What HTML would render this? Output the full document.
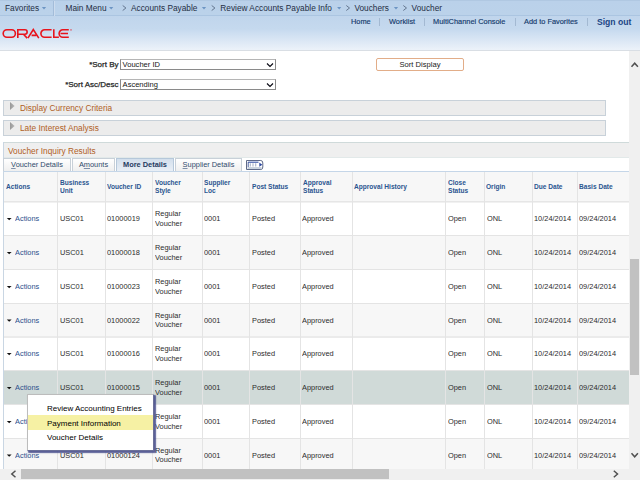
<!DOCTYPE html>
<html><head><meta charset="utf-8"><style>
*{margin:0;padding:0;box-sizing:border-box}
html,body{width:640px;height:480px;overflow:hidden;background:#fff;font-family:"Liberation Sans",sans-serif}
div{position:absolute;white-space:nowrap}
svg{position:absolute}
#nav{left:0;top:0;width:640px;height:16px;background:linear-gradient(#b0c8e2 0,#b0c8e2 1px,#bad1ea 1px,#bbd2ea 15px,#abc5e1 15px,#abc5e1 16px)}
.nt{top:2px;font-size:8.3px;color:#1f2e44;line-height:12px}
.dd{top:7.5px;width:0;height:0;border-left:2px solid transparent;border-right:2px solid transparent;border-top:2.5px solid #6f93bd}
#hdr{left:0;top:16px;width:640px;height:34px;background:linear-gradient(#c0d5ec 0,#c5d9ee 13px,#cddef1 17px,#d8e5f4 23px,#e3ecf7 29px,#ecf2f9 34px)}
#hline{left:0;top:50px;width:640px;height:1px;background:#d9dee4}
.hl{top:17px;font-size:7.4px;color:#143a6c;line-height:10px;-webkit-text-stroke:0.15px #143a6c}
.hs{top:18px;width:1px;height:8px;background:#a3b9d2}
.lbl{font-size:8px;color:#262626;line-height:10px;text-align:right;-webkit-text-stroke:0.25px #262626}
.sel{left:120px;width:156px;height:11px;border:1px solid #8a8a8a;border-top-color:#b5b5b5;background:#fff;font-size:7.55px;color:#151515;line-height:9px;padding-left:1.6px}
.bar{left:3px;width:603px;height:16px;background:#ececec;border:1px solid #c8d1d9}
.tri{left:6px;top:2px;width:0;height:0;border-top:3.75px solid transparent;border-bottom:3.75px solid transparent;border-left:5px solid #999}
.bt{left:16px;top:2px;font-size:8.3px;color:#b0601f;line-height:10px}
.tab{top:158px;height:13px;border:1px solid #c8d0d8;border-bottom:none;background:linear-gradient(#fff,#efefef);font-size:7.4px;color:#2f4b6b;line-height:11px;text-align:center}
.tab.s{background:linear-gradient(#d3dfec,#e9eff6);border-color:#b6c8da;color:#1f3b61;font-weight:bold}
.th{font-size:7.4px;font-weight:bold;color:#2a5590;line-height:7.6px;transform:scaleX(.89);transform-origin:0 0}
.td{font-size:7.9px;color:#2c2c2c;line-height:9px;transform:scaleX(.937);transform-origin:0 0}
.lk{color:#2b4f8c}
u{text-decoration-color:#7f90a8;text-decoration-thickness:0.6px;text-underline-offset:1px}
.vl{width:1px;background:#e4e4e4}
.at{width:0;height:0;border-left:2.25px solid transparent;border-right:2.25px solid transparent;border-top:2.5px solid #222}
.mi{left:47px;font-size:8px;color:#000;line-height:10px}
</style></head><body>
<div id="nav">
<div class="nt" style="left:5px">Favorites</div>
<div style="left:53px;top:1px;width:1px;height:15px;background:#a3bcd9"></div>
<div style="left:54px;top:1px;width:1px;height:15px;background:#cddcee"></div>
<div class="nt" style="left:65.5px">Main Menu</div>
<div class="nt" style="left:131px">Accounts Payable</div>
<div class="nt" style="left:220.3px">Review Accounts Payable Info</div>
<div class="nt" style="left:354.4px">Vouchers</div>
<svg style="left:0;top:0" width="640" height="16" viewBox="0 0 640 16"><path d="M122.7 5.5L125.9 8L122.7 10.5M211.7 5.5L214.89999999999998 8L211.7 10.5M346.3 5.5L349.5 8L346.3 10.5M403.3 5.5L406.5 8L403.3 10.5" fill="none" stroke="#5f7189" stroke-width="0.95"/><path d="M41.9 7.1H46.1L44.0 9.5ZM109.1 7.1H113.3L111.19999999999999 9.5ZM201.9 7.1H206.1L204.0 9.5ZM337.1 7.1H341.3L339.20000000000005 9.5ZM393.9 7.1H398.09999999999997L396.0 9.5Z" fill="#6d95c4"/></svg>
<div class="nt" style="left:411.6px">Voucher</div>
</div>
<div id="hdr"></div>
<svg style="left:0;top:24px" width="80" height="20" viewBox="0 24 80 20"><g fill="none" stroke="#e8141c" stroke-width="1.6"><rect x="3.2" y="29.8" width="12.2" height="7.4" rx="3.7"/><path d="M17.8 38.1V29.8H24.9A2.25 2.25 0 0 1 24.9 34.3H17.8M23.4 34.3L27.2 38.1"/><path d="M27.9 38.1L33.3 29.6L38.8 38.1M31.6 35.4H36.2"/><path d="M51.6 29.8H44.6A3.7 3.7 0 0 0 44.6 37.2H51.6"/><path d="M53.8 29.2V37.2H58.9"/><path d="M68.8 29.8H62.8A3.7 3.7 0 0 0 62.8 37.2H68.8M60.5 33.5H68"/></g><circle cx="71" cy="29.9" r="0.8" fill="#e8141c" opacity=".6"/></svg>
<div id="hline"></div>
<div class="hl" style="left:351px">Home</div>
<div class="hl" style="left:389px">Worklist</div>
<div class="hl" style="left:433px">MultiChannel Console</div>
<div class="hl" style="left:524px">Add to Favorites</div>
<div class="hs" style="left:379px"></div>
<div class="hs" style="left:424px"></div>
<div class="hs" style="left:515px"></div>
<div class="hs" style="left:587px"></div>
<div class="hl" style="left:597px;font-size:8.6px;font-weight:bold;top:16.5px;color:#1b4584;-webkit-text-stroke:0">Sign out</div>
<div class="lbl" style="left:40px;width:78.5px;top:60px">*Sort By</div>
<div class="sel" style="top:59px">Voucher ID<svg style="right:1px;top:1.5px" width="8" height="6" viewBox="0 0 8 6"><path d="M1 1.5 L4 4.5 L7 1.5" fill="none" stroke="#0a0a14" stroke-width="1.15"/></svg></div>
<div class="lbl" style="left:40px;width:78.5px;top:80px">*Sort Asc/Desc</div>
<div class="sel" style="top:79px">Ascending<svg style="right:1px;top:1.5px" width="8" height="6" viewBox="0 0 8 6"><path d="M1 1.5 L4 4.5 L7 1.5" fill="none" stroke="#0a0a14" stroke-width="1.15"/></svg></div>
<div style="left:376px;top:58px;width:88px;height:13px;border:1px solid #e2ad88;border-radius:2px;background:#fff;font-size:7.6px;color:#1a1a1a;text-align:center;line-height:11px">Sort Display</div>
<div class="bar" style="top:100px"><svg style="left:5px;top:0px" width="7" height="10" viewBox="0 0 7 10"><defs><linearGradient id="tg" x1="0" x2="1"><stop offset="0" stop-color="#989898"/><stop offset="1" stop-color="#b6b6b6"/></linearGradient></defs><path d="M1 1.1L5.6 5L1 8.9Z" fill="url(#tg)"/></svg><div class="bt">Display Currency Criteria</div></div>
<div class="bar" style="top:120px"><svg style="left:5px;top:0px" width="7" height="10" viewBox="0 0 7 10"><defs><linearGradient id="tg" x1="0" x2="1"><stop offset="0" stop-color="#989898"/><stop offset="1" stop-color="#b6b6b6"/></linearGradient></defs><path d="M1 1.1L5.6 5L1 8.9Z" fill="url(#tg)"/></svg><div class="bt">Late Interest Analysis</div></div>
<div style="left:3px;top:142px;width:627px;height:1px;background:#cfdada"></div>
<div style="left:3px;top:143px;width:627px;height:14px;background:#efefef"></div>
<div style="left:3px;top:157px;width:627px;height:1px;background:#e2e9e9"></div>
<div style="left:8px;top:146px;font-size:8.3px;color:#b0601f;line-height:10px">Voucher Inquiry Results</div>
<div style="left:3px;top:171px;width:627px;height:1px;background:#c5d6e8"></div>
<div style="left:4px;top:172px;width:626px;height:29px;background:#f7f7f7"></div>
<div style="left:4px;top:201px;width:626px;height:1px;background:#e6e6e6"></div>
<div style="left:4px;top:202px;width:626px;height:1px;background:#f1f1f1"></div>
<div style="left:4px;top:203px;width:626px;height:32px;background:#fff"></div>
<div style="left:4px;top:236px;width:626px;height:33px;background:#f7f7f7"></div>
<div style="left:4px;top:270px;width:626px;height:33px;background:#fff"></div>
<div style="left:4px;top:304px;width:626px;height:32px;background:#f7f7f7"></div>
<div style="left:4px;top:337px;width:626px;height:33px;background:#fff"></div>
<div style="left:4px;top:371px;width:626px;height:33px;background:#d0dad8"></div>
<div style="left:4px;top:405px;width:626px;height:33px;background:#fff"></div>
<div style="left:4px;top:439px;width:626px;height:31px;background:#f7f7f7"></div>
<div style="left:4px;top:235px;width:626px;height:1px;background:#e4e4e4"></div>
<div style="left:4px;top:269px;width:626px;height:1px;background:#e4e4e4"></div>
<div style="left:4px;top:303px;width:626px;height:1px;background:#e4e4e4"></div>
<div style="left:4px;top:336px;width:626px;height:2px;background:#ebebeb"></div>
<div style="left:4px;top:370px;width:626px;height:1px;background:#e4e4e4"></div>
<div style="left:4px;top:404px;width:626px;height:1px;background:#e4e4e4"></div>
<div style="left:4px;top:438px;width:626px;height:1px;background:#e4e4e4"></div>
<div class="vl" style="left:57px;top:172px;height:300px"></div>
<div class="vl" style="left:105px;top:172px;height:300px"></div>
<div class="vl" style="left:152px;top:172px;height:300px"></div>
<div class="vl" style="left:202px;top:172px;height:300px"></div>
<div class="vl" style="left:249px;top:172px;height:300px"></div>
<div class="vl" style="left:300px;top:172px;height:300px"></div>
<div class="vl" style="left:352px;top:172px;height:300px"></div>
<div class="vl" style="left:445px;top:172px;height:300px"></div>
<div class="vl" style="left:484px;top:172px;height:300px"></div>
<div class="vl" style="left:532px;top:172px;height:300px"></div>
<div class="vl" style="left:577px;top:172px;height:300px"></div>
<div style="left:3px;top:142px;width:1px;height:330px;background:#c9d6e3"></div>
<div class="tab" style="left:3px;width:68px"><u>V</u>oucher Details</div>
<div class="tab" style="left:72px;width:43px">A<u>m</u>ounts</div>
<div class="tab s" style="left:116px;width:58px">More Details</div>
<div class="tab" style="left:175px;width:67px"><u>S</u>upplier Details</div>
<svg style="left:245px;top:159px" width="20" height="12" viewBox="245 159 20 12"><path d="M246.5 160.5H260.8Q262.8 160.5 262.8 163V167Q262.8 169.5 260.8 169.5H246.5Z" fill="#fff" stroke="#5f6a88" stroke-width="1"/><rect x="247.5" y="167" width="14" height="2" fill="#c9d3de"/><path d="M248.2 162.2H258.5" stroke="#3350a5" stroke-width="1.1"/><path d="M248.2 162V167" stroke="#3a4f95" stroke-width="0.9"/><path d="M250.3 163.3V166.5M253 163.3V166.5M255.7 163.3V166.5" stroke="#a8b4c8" stroke-width="1.1"/><path d="M259.3 162.6L262.3 164.7L259.3 166.8Z" fill="#2f4aa0"/></svg>
<div class="th" style="left:6px;top:183.0px">Actions</div>
<div class="th" style="left:60px;top:179.0px">Business<br>Unit</div>
<div class="th" style="left:107px;top:183.0px">Voucher ID</div>
<div class="th" style="left:155px;top:179.0px">Voucher<br>Style</div>
<div class="th" style="left:204px;top:179.0px">Supplier<br>Loc</div>
<div class="th" style="left:252px;top:183.0px">Post Status</div>
<div class="th" style="left:303px;top:179.0px">Approval<br>Status</div>
<div class="th" style="left:354px;top:183.0px">Approval History</div>
<div class="th" style="left:448px;top:179.0px">Close<br>Status</div>
<div class="th" style="left:486px;top:183.0px">Origin</div>
<div class="th" style="left:534px;top:183.0px">Due Date</div>
<div class="th" style="left:579px;top:183.0px">Basis Date</div>
<svg style="left:6px;top:203px" width="8" height="40" viewBox="6 203 8 40"><path d="M6.8 218.00H11.6L9.2 220.30Z" fill="#111"/></svg>
<div class="td lk" style="left:15px;top:214.2px">Actions</div>
<div class="td" style="left:59.5px;top:214.2px">USC01</div>
<div class="td" style="left:107px;top:214.2px">01000019</div>
<div class="td" style="left:155px;top:209.0px;line-height:9.8px">Regular<br>Voucher</div>
<div class="td" style="left:204px;top:214.2px">0001</div>
<div class="td" style="left:252px;top:214.2px">Posted</div>
<div class="td" style="left:302px;top:214.2px">Approved</div>
<div class="td" style="left:447.5px;top:214.2px">Open</div>
<div class="td" style="left:486.5px;top:214.2px">ONL</div>
<div class="td" style="left:534px;top:214.2px">10/24/2014</div>
<div class="td" style="left:579px;top:214.2px">09/24/2014</div>
<svg style="left:6px;top:236px" width="8" height="40" viewBox="6 236 8 40"><path d="M6.8 252.00H11.6L9.2 254.30Z" fill="#111"/></svg>
<div class="td lk" style="left:15px;top:248.2px">Actions</div>
<div class="td" style="left:59.5px;top:248.2px">USC01</div>
<div class="td" style="left:107px;top:248.2px">01000018</div>
<div class="td" style="left:155px;top:243.0px;line-height:9.8px">Regular<br>Voucher</div>
<div class="td" style="left:204px;top:248.2px">0001</div>
<div class="td" style="left:252px;top:248.2px">Posted</div>
<div class="td" style="left:302px;top:248.2px">Approved</div>
<div class="td" style="left:447.5px;top:248.2px">Open</div>
<div class="td" style="left:486.5px;top:248.2px">ONL</div>
<div class="td" style="left:534px;top:248.2px">10/24/2014</div>
<div class="td" style="left:579px;top:248.2px">09/24/2014</div>
<svg style="left:6px;top:270px" width="8" height="40" viewBox="6 270 8 40"><path d="M6.8 286.00H11.6L9.2 288.30Z" fill="#111"/></svg>
<div class="td lk" style="left:15px;top:282.2px">Actions</div>
<div class="td" style="left:59.5px;top:282.2px">USC01</div>
<div class="td" style="left:107px;top:282.2px">01000023</div>
<div class="td" style="left:155px;top:277.0px;line-height:9.8px">Regular<br>Voucher</div>
<div class="td" style="left:204px;top:282.2px">0001</div>
<div class="td" style="left:252px;top:282.2px">Posted</div>
<div class="td" style="left:302px;top:282.2px">Approved</div>
<div class="td" style="left:447.5px;top:282.2px">Open</div>
<div class="td" style="left:486.5px;top:282.2px">ONL</div>
<div class="td" style="left:534px;top:282.2px">10/24/2014</div>
<div class="td" style="left:579px;top:282.2px">09/24/2014</div>
<svg style="left:6px;top:304px" width="8" height="40" viewBox="6 304 8 40"><path d="M6.8 319.50H11.6L9.2 321.80Z" fill="#111"/></svg>
<div class="td lk" style="left:15px;top:315.7px">Actions</div>
<div class="td" style="left:59.5px;top:315.7px">USC01</div>
<div class="td" style="left:107px;top:315.7px">01000022</div>
<div class="td" style="left:155px;top:310.5px;line-height:9.8px">Regular<br>Voucher</div>
<div class="td" style="left:204px;top:315.7px">0001</div>
<div class="td" style="left:252px;top:315.7px">Posted</div>
<div class="td" style="left:302px;top:315.7px">Approved</div>
<div class="td" style="left:447.5px;top:315.7px">Open</div>
<div class="td" style="left:486.5px;top:315.7px">ONL</div>
<div class="td" style="left:534px;top:315.7px">10/24/2014</div>
<div class="td" style="left:579px;top:315.7px">09/24/2014</div>
<svg style="left:6px;top:337px" width="8" height="40" viewBox="6 337 8 40"><path d="M6.8 353.00H11.6L9.2 355.30Z" fill="#111"/></svg>
<div class="td lk" style="left:15px;top:349.2px">Actions</div>
<div class="td" style="left:59.5px;top:349.2px">USC01</div>
<div class="td" style="left:107px;top:349.2px">01000016</div>
<div class="td" style="left:155px;top:344.0px;line-height:9.8px">Regular<br>Voucher</div>
<div class="td" style="left:204px;top:349.2px">0001</div>
<div class="td" style="left:252px;top:349.2px">Posted</div>
<div class="td" style="left:302px;top:349.2px">Approved</div>
<div class="td" style="left:447.5px;top:349.2px">Open</div>
<div class="td" style="left:486.5px;top:349.2px">ONL</div>
<div class="td" style="left:534px;top:349.2px">10/24/2014</div>
<div class="td" style="left:579px;top:349.2px">09/24/2014</div>
<svg style="left:6px;top:371px" width="8" height="40" viewBox="6 371 8 40"><path d="M6.8 387.00H11.6L9.2 389.30Z" fill="#111"/></svg>
<div class="td lk" style="left:15px;top:383.2px">Actions</div>
<div class="td" style="left:59.5px;top:383.2px">USC01</div>
<div class="td" style="left:107px;top:383.2px">01000015</div>
<div class="td" style="left:155px;top:378.0px;line-height:9.8px">Regular<br>Voucher</div>
<div class="td" style="left:204px;top:383.2px">0001</div>
<div class="td" style="left:252px;top:383.2px">Posted</div>
<div class="td" style="left:302px;top:383.2px">Approved</div>
<div class="td" style="left:447.5px;top:383.2px">Open</div>
<div class="td" style="left:486.5px;top:383.2px">ONL</div>
<div class="td" style="left:534px;top:383.2px">10/24/2014</div>
<div class="td" style="left:579px;top:383.2px">09/24/2014</div>
<svg style="left:6px;top:405px" width="8" height="40" viewBox="6 405 8 40"><path d="M6.8 421.00H11.6L9.2 423.30Z" fill="#111"/></svg>
<div class="td lk" style="left:15px;top:417.2px">Actions</div>
<div class="td" style="left:59.5px;top:417.2px">USC01</div>
<div class="td" style="left:107px;top:417.2px">01000017</div>
<div class="td" style="left:155px;top:412.0px;line-height:9.8px">Regular<br>Voucher</div>
<div class="td" style="left:204px;top:417.2px">0001</div>
<div class="td" style="left:252px;top:417.2px">Posted</div>
<div class="td" style="left:302px;top:417.2px">Approved</div>
<div class="td" style="left:447.5px;top:417.2px">Open</div>
<div class="td" style="left:486.5px;top:417.2px">ONL</div>
<div class="td" style="left:534px;top:417.2px">10/24/2014</div>
<div class="td" style="left:579px;top:417.2px">09/24/2014</div>
<svg style="left:6px;top:439px" width="8" height="40" viewBox="6 439 8 40"><path d="M6.8 454.50H11.6L9.2 456.80Z" fill="#111"/></svg>
<div class="td lk" style="left:15px;top:450.7px">Actions</div>
<div class="td" style="left:59.5px;top:450.7px">USC01</div>
<div class="td" style="left:107px;top:450.7px">01000124</div>
<div class="td" style="left:155px;top:445.5px;line-height:9.8px">Regular<br>Voucher</div>
<div class="td" style="left:204px;top:450.7px">0001</div>
<div class="td" style="left:252px;top:450.7px">Posted</div>
<div class="td" style="left:302px;top:450.7px">Approved</div>
<div class="td" style="left:447.5px;top:450.7px">Open</div>
<div class="td" style="left:486.5px;top:450.7px">ONL</div>
<div class="td" style="left:534px;top:450.7px">10/24/2014</div>
<div class="td" style="left:579px;top:450.7px">09/24/2014</div>
<div style="left:27px;top:394px;width:127px;height:57px;background:#fff;border-radius:1px;box-shadow:1.5px 1.5px 1.2px rgba(72,78,140,.9);border:1px solid #bcbcbc;border-right-color:#6a6f98;border-bottom-color:#6a6f98"></div>
<div style="left:28px;top:415px;width:125px;height:14.5px;background:#f6f1a4"></div>
<div class="mi" style="top:403.5px">Review Accounting Entries</div>
<div class="mi" style="top:418.5px">Payment Information</div>
<div class="mi" style="top:433px">Voucher Details</div>
<div style="left:629px;top:51px;width:11px;height:429px;background:#f0f0f0"></div>
<div style="left:630px;top:259px;width:9px;height:116px;background:#c1c1c1"></div>
<div style="left:0;top:469px;width:630px;height:11px;background:#f0f0f0"></div>
<div style="left:21px;top:469px;width:368px;height:10px;background:#c1c1c1"></div>
<svg style="left:0;top:0" width="640" height="480" viewBox="0 0 640 480"><path d="M631.5 66.8L634.7 63.2L637.9 66.8M631.5 453.2L634.7 456.8L637.9 453.2M15.5 470.8L11.8 474L15.5 477.2M613.8 470.8L617.5 474L613.8 477.2" fill="none" stroke="#505050" stroke-width="1.5"/></svg>
</body></html>
